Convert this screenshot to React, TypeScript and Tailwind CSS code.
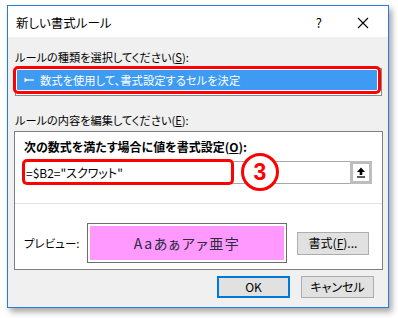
import React from "react";

const F = "font-['Noto_Sans_CJK_JP','Noto_Sans',sans-serif] [font-feature-settings:'palt']";

export default function App() {
  return (
    <div className={`w-[398px] h-[318px] bg-white overflow-hidden ${F} text-black`}>
      <div className="ml-[7px] mt-[5px] w-[382px] h-[303px] border border-[#2b7bd9] shadow-[3px_4px_6px_rgba(0,0,0,0.35)] flex flex-col bg-[#f0f0f0]">
        {/* title bar */}
        <div className="h-[31px] bg-white flex items-center pl-[8px] shrink-0">
          <span className="text-[12.5px] leading-[16px] flex-1 mt-[2px]">新しい書式ルール</span>
          <span className="text-[13px] leading-[16px] mr-[35px] mt-[2px]">?</span>
          <svg width="12" height="12" viewBox="0 0 12 12" className="mr-[19px] mt-[2px]">
            <path d="M1 1 L11 11 M11 1 L1 11" stroke="#000" strokeWidth="1.1" />
          </svg>
        </div>
        {/* body */}
        <div className="flex-1 flex flex-col">
          <div className="mt-[12px] ml-[7px] h-[16px] text-[11.2px] leading-[16px]">
            ルールの種類を選択してください(<span className="underline">S</span>):
          </div>
          <div className="relative mt-[1px] ml-[5px] w-[368px] h-[28px]">
            <div className="absolute left-[2px] top-[2px] w-[367px] h-[28px] border border-[#8a8a8a] bg-white" />
            <div className="absolute inset-0 border-[3px] border-[#ff0000] rounded-[5px] bg-white p-[1px]">
              <div className="h-full bg-[#3d9bf4] flex items-center pl-[7px] rounded-[1px]">
                <svg width="11" height="8" viewBox="0 0 11 8" className="mr-[5px]">
                  <path d="M0.5 1.5 L3.5 4 L0.5 6.5 Z" fill="#fff" />
                  <path d="M2 4 L10 4" stroke="#fff" strokeWidth="1.3" />
                </svg>
                <span className="text-white text-[11.3px] leading-[16px]">数式を使用して、書式設定するセルを決定</span>
              </div>
            </div>
          </div>
          <div className="mt-[18px] ml-[7px] h-[16px] text-[11.2px] leading-[16px]">
            ルールの内容を編集してください(<span className="underline">E</span>):
          </div>
          {/* panel */}
          <div className="mt-[3px] ml-[6px] w-[369px] h-[139px] border border-[#808080] bg-white flex flex-col">
            <div className="mt-[7px] ml-[9px] h-[16px] text-[12px] leading-[16px] font-bold">
              次の数式を満たす場合に値を書式設定(<span className="underline">O</span>):
            </div>
            <div className="relative mt-[4px] h-[26px]">
              <div className="mt-[2px] ml-[8px] w-[349px] h-[23px] border border-[#a8a8a8] flex items-center">
                <span className="ml-[2px] flex-1 text-[12px] leading-[16px]">=$B2="スクワット"</span>
                <div className="w-[22px] h-[23px] -mr-[1px] border-[3px] border-[#bdbdbd] bg-white flex items-center justify-center">
                  <svg width="10" height="11" viewBox="0 0 10 11">
                    <path d="M5 0.5 L9 5 L6.3 5 L6.3 8 L3.7 8 L3.7 5 L1 5 Z" fill="#000" />
                    <path d="M1 10 L9 10" stroke="#000" strokeWidth="1.3" />
                  </svg>
                </div>
              </div>
              <div className="absolute left-[7px] top-0 w-[212px] h-[26px] border-[3px] border-[#ff0000] rounded-[5px]" />
              <div className="absolute left-[226px] top-[-6px] w-[38px] h-[38px] rounded-full border-[3px] border-[#ff0000] bg-white flex items-center justify-center">
                <span className="text-[#ff0000] font-bold text-[23px] leading-[23px] font-['Liberation_Sans',sans-serif]">3</span>
              </div>
            </div>
            <div className="mt-[18px] h-px bg-[#e3e3e3]" />
            <div className="mt-[19px] flex items-center">
              <span className="ml-[9px] w-[63px] text-[11.5px] leading-[16px]">プレビュー:</span>
              <div className="w-[200px] h-[40px] border border-[#6d6d6d] p-[2px] bg-white">
                <div className="h-full bg-[#ff99ff] flex items-center justify-center text-[14px] leading-[18px] text-[#2a2a3a] tracking-[1.5px]">
                  Aaあぁアァ亜宇
                </div>
              </div>
              <div className="ml-[10px] w-[72px] h-[23px] bg-[#e1e1e1] border border-[#adadad] flex items-center justify-center text-[12px] leading-[16px]">
                書式(<span className="underline">F</span>)...
              </div>
            </div>
          </div>
          <div className="mt-[6px] flex justify-end pr-[14px] gap-[11px]">
            <div className="w-[73px] h-[22px] bg-[#e1e1e1] border-2 border-[#0078d7] flex items-center justify-center text-[12px] leading-[16px]">
              OK
            </div>
            <div className="w-[73px] h-[22px] bg-[#e1e1e1] border border-[#adadad] flex items-center justify-center text-[12px] leading-[16px]">
              キャンセル
            </div>
          </div>
        </div>
      </div>
    </div>
  );
}
